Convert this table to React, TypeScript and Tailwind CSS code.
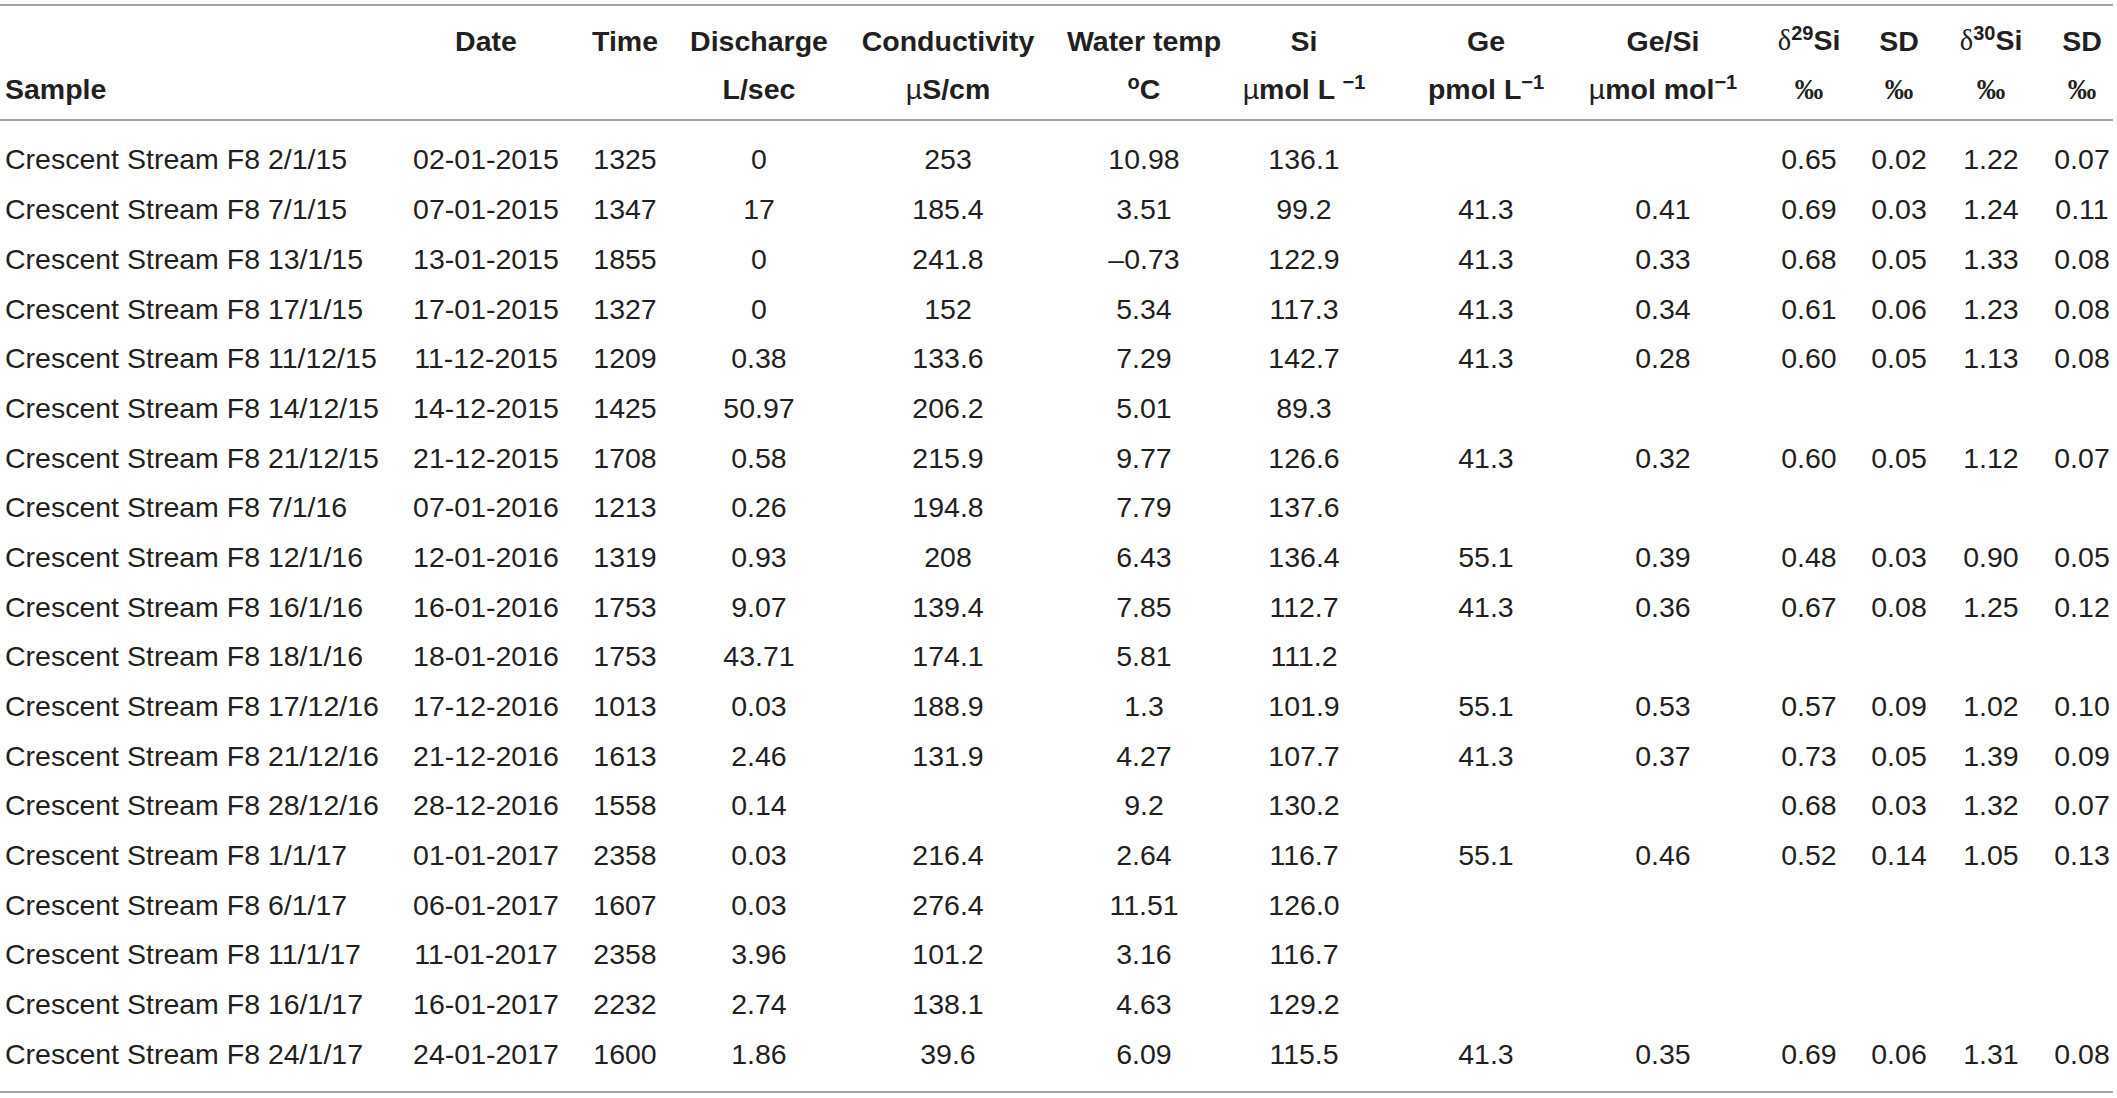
const rows: string[][] = [
  ["Crescent Stream F8 2/1/15", "02-01-2015", "1325", "0", "253", "10.98", "136.1", "", "", "0.65", "0.02", "1.22", "0.07"],
  ["Crescent Stream F8 7/1/15", "07-01-2015", "1347", "17", "185.4", "3.51", "99.2", "41.3", "0.41", "0.69", "0.03", "1.24", "0.11"],
  ["Crescent Stream F8 13/1/15", "13-01-2015", "1855", "0", "241.8", "\u20130.73", "122.9", "41.3", "0.33", "0.68", "0.05", "1.33", "0.08"],
  ["Crescent Stream F8 17/1/15", "17-01-2015", "1327", "0", "152", "5.34", "117.3", "41.3", "0.34", "0.61", "0.06", "1.23", "0.08"],
  ["Crescent Stream F8 11/12/15", "11-12-2015", "1209", "0.38", "133.6", "7.29", "142.7", "41.3", "0.28", "0.60", "0.05", "1.13", "0.08"],
  ["Crescent Stream F8 14/12/15", "14-12-2015", "1425", "50.97", "206.2", "5.01", "89.3", "", "", "", "", "", ""],
  ["Crescent Stream F8 21/12/15", "21-12-2015", "1708", "0.58", "215.9", "9.77", "126.6", "41.3", "0.32", "0.60", "0.05", "1.12", "0.07"],
  ["Crescent Stream F8 7/1/16", "07-01-2016", "1213", "0.26", "194.8", "7.79", "137.6", "", "", "", "", "", ""],
  ["Crescent Stream F8 12/1/16", "12-01-2016", "1319", "0.93", "208", "6.43", "136.4", "55.1", "0.39", "0.48", "0.03", "0.90", "0.05"],
  ["Crescent Stream F8 16/1/16", "16-01-2016", "1753", "9.07", "139.4", "7.85", "112.7", "41.3", "0.36", "0.67", "0.08", "1.25", "0.12"],
  ["Crescent Stream F8 18/1/16", "18-01-2016", "1753", "43.71", "174.1", "5.81", "111.2", "", "", "", "", "", ""],
  ["Crescent Stream F8 17/12/16", "17-12-2016", "1013", "0.03", "188.9", "1.3", "101.9", "55.1", "0.53", "0.57", "0.09", "1.02", "0.10"],
  ["Crescent Stream F8 21/12/16", "21-12-2016", "1613", "2.46", "131.9", "4.27", "107.7", "41.3", "0.37", "0.73", "0.05", "1.39", "0.09"],
  ["Crescent Stream F8 28/12/16", "28-12-2016", "1558", "0.14", "", "9.2", "130.2", "", "", "0.68", "0.03", "1.32", "0.07"],
  ["Crescent Stream F8 1/1/17", "01-01-2017", "2358", "0.03", "216.4", "2.64", "116.7", "55.1", "0.46", "0.52", "0.14", "1.05", "0.13"],
  ["Crescent Stream F8 6/1/17", "06-01-2017", "1607", "0.03", "276.4", "11.51", "126.0", "", "", "", "", "", ""],
  ["Crescent Stream F8 11/1/17", "11-01-2017", "2358", "3.96", "101.2", "3.16", "116.7", "", "", "", "", "", ""],
  ["Crescent Stream F8 16/1/17", "16-01-2017", "2232", "2.74", "138.1", "4.63", "129.2", "", "", "", "", "", ""],
  ["Crescent Stream F8 24/1/17", "24-01-2017", "1600", "1.86", "39.6", "6.09", "115.5", "41.3", "0.35", "0.69", "0.06", "1.31", "0.08"],
];

const gridCols =
  "grid grid-cols-[416px_140px_138px_130px_248px_144px_176px_188px_166px_126px_54px_130px_52px]";

function Cell({ children }: { children?: React.ReactNode }) {
  return (
    <div className="flex items-center justify-center whitespace-nowrap">
      <span>{children}</span>
    </div>
  );
}

const Sup = ({ children }: { children: React.ReactNode }) => (
  <sup className="relative -top-[10px] align-baseline text-[20px]">{children}</sup>
);

const Mu = () => <span className="font-normal">µ</span>;

const Permil = () => (
  <span className="font-['Liberation_Serif',serif] font-bold">‰</span>
);

const Delta = () => (
  <span className="font-['Liberation_Serif',serif] font-normal">δ</span>
);

export default function App() {
  return (
    <div className="min-h-[1098px] bg-white pt-[4px] font-['Liberation_Sans',Arial,sans-serif] text-[28.5px] text-[#231f20]">
      <div className="w-[2113px] border-y-2 border-[#a3a3a3]">
        <div className="pt-[11px] pb-[5px] font-bold">
          <div className={`${gridCols} h-[48.5px]`}>
            <div />
            <Cell>Date</Cell>
            <Cell>Time</Cell>
            <Cell>Discharge</Cell>
            <Cell>Conductivity</Cell>
            <Cell>Water temp</Cell>
            <Cell>Si</Cell>
            <Cell>Ge</Cell>
            <Cell>Ge/Si</Cell>
            <Cell>
              <Delta />
              <Sup>29</Sup>Si
            </Cell>
            <Cell>SD</Cell>
            <Cell>
              <Delta />
              <Sup>30</Sup>Si
            </Cell>
            <Cell>SD</Cell>
          </div>
          <div className={`${gridCols} h-[48.5px]`}>
            <div className="flex items-center pl-[5px]">Sample</div>
            <Cell />
            <Cell />
            <Cell>L/sec</Cell>
            <Cell>
              <Mu />
              S/cm
            </Cell>
            <Cell>
              <Sup>o</Sup>C
            </Cell>
            <Cell>
              <Mu />
              mol L <Sup>−1</Sup>
            </Cell>
            <Cell>
              pmol L<Sup>−1</Sup>
            </Cell>
            <Cell>
              <Mu />
              mol mol<Sup>−1</Sup>
            </Cell>
            <Cell>
              <Permil />
            </Cell>
            <Cell>
              <Permil />
            </Cell>
            <Cell>
              <Permil />
            </Cell>
            <Cell>
              <Permil />
            </Cell>
          </div>
        </div>
        <div className="border-t-2 border-[#a3a3a3] pt-[14px] pb-[12px]">
          {rows.map((r, i) => (
            <div key={i} className={`${gridCols} h-[49.7px]`}>
              <div className="flex items-center whitespace-nowrap pl-[5px]">{r[0]}</div>
              {r.slice(1).map((v, j) => (
                <Cell key={j}>{v}</Cell>
              ))}
            </div>
          ))}
        </div>
      </div>
    </div>
  );
}
